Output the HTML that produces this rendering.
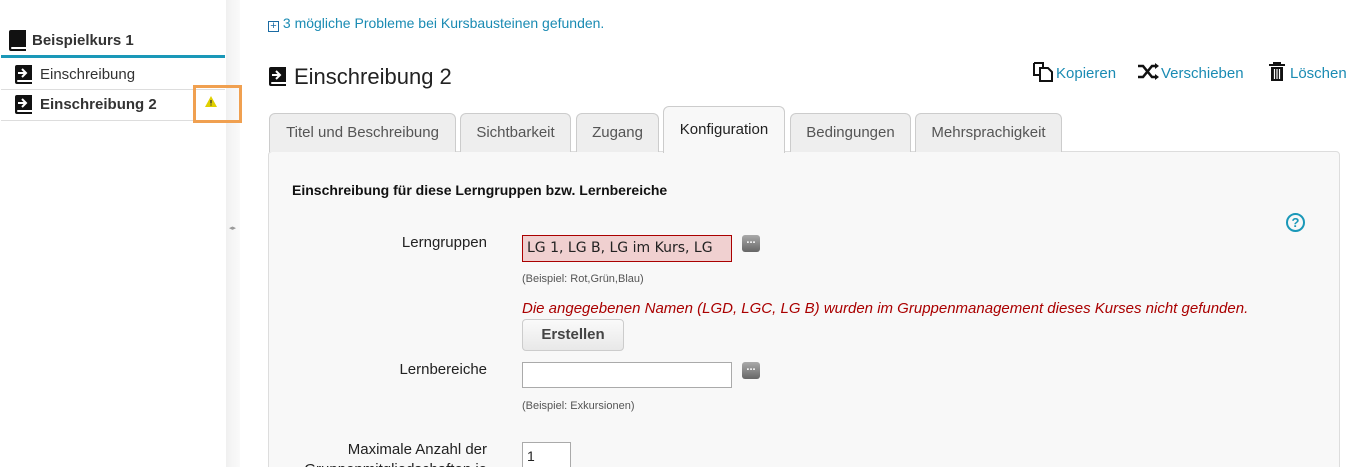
<!DOCTYPE html>
<html><head><meta charset="utf-8"><style>
*{box-sizing:border-box}
html,body{margin:0;width:1366px;height:467px;overflow:hidden}
body{background:#fff;font-family:"Liberation Sans",Arial,sans-serif;color:#222;position:relative}
.a{position:absolute}
.link{color:#1a8bb3}
.tab{position:absolute;top:113px;height:39px;border:1px solid #ccc;border-bottom:none;border-radius:6px 6px 0 0;background:#eee;color:#555;font-size:15px;text-align:center;line-height:38px}
.lbl{position:absolute;font-size:15px;text-align:right;width:220px}
.small{position:absolute;font-size:11px;color:#555}
.dots{position:absolute;width:18px;height:17px;background:linear-gradient(#aaa,#666);border-radius:3px;color:#fff;font-size:11px;line-height:10px;text-align:center;font-weight:bold}
.ni{position:absolute;width:17px;height:19px}
</style></head><body>
<div class="a" style="left:226px;top:0;width:14px;height:467px;background:linear-gradient(90deg,#f0f0f0,#f6f6f6,#fafafa)"></div>
<div class="a" style="left:229px;top:224px;font-size:7px;color:#999">◂▸</div>

<svg class="a" style="left:9px;top:30px" width="17" height="21" viewBox="0 0 17 21"><path d="M2 0h15v17H3a1 1 0 0 0 0 2h14v2H2a2 2 0 0 1-2-2V2a2 2 0 0 1 2-2z" fill="#111"/></svg>
<div class="a" style="left:32px;top:32px;font-size:15px;font-weight:bold;color:#333">Beispielkurs 1</div>
<div class="a" style="left:1px;top:55px;width:224px;height:3px;background:#1a98b8"></div>
<svg class="ni" style="left:15px;top:65px" viewBox="0 0 17 19"><path d="M2 0h15v15H3a1 1 0 0 0 0 2h14v2H2a2 2 0 0 1-2-2V2a2 2 0 0 1 2-2z" fill="#111"/><path d="M3 8h7M7 4l4 4-4 4" stroke="#fff" stroke-width="2" fill="none"/></svg>
<div class="a" style="left:40px;top:66px;font-size:15px;color:#333">Einschreibung</div>
<div class="a" style="left:1px;top:89px;width:224px;height:1px;background:#ddd"></div>
<svg class="ni" style="left:15px;top:95px" viewBox="0 0 17 19"><path d="M2 0h15v15H3a1 1 0 0 0 0 2h14v2H2a2 2 0 0 1-2-2V2a2 2 0 0 1 2-2z" fill="#111"/><path d="M3 8h7M7 4l4 4-4 4" stroke="#fff" stroke-width="2" fill="none"/></svg>
<div class="a" style="left:40px;top:96px;font-size:15px;font-weight:bold;color:#333">Einschreibung 2</div>
<div class="a" style="left:1px;top:120px;width:224px;height:1px;background:#ddd"></div>
<div class="a" style="left:193px;top:85px;width:49px;height:38px;border:3px solid #f0a050"></div>
<svg class="a" style="left:205px;top:96px" width="12" height="11" viewBox="0 0 12 11"><path d="M6 0L12 11H0z" fill="#e0d000"/><path d="M6 4v3.5M6 8.5v1" stroke="#333" stroke-width="1.3"/></svg>

<div class="a link" style="left:268px;top:15px;font-size:14px"><span style="display:inline-block;width:11px;height:11px;border:1px solid #1a6ba3;font-size:11px;line-height:9px;text-align:center;color:#1a6ba3;vertical-align:-1px">+</span> 3 mögliche Probleme bei Kursbausteinen gefunden.</div>

<svg class="ni" style="left:269px;top:67px" viewBox="0 0 17 19"><path d="M2 0h15v15H3a1 1 0 0 0 0 2h14v2H2a2 2 0 0 1-2-2V2a2 2 0 0 1 2-2z" fill="#111"/><path d="M3 8h7M7 4l4 4-4 4" stroke="#fff" stroke-width="2" fill="none"/></svg>
<div class="a" style="left:294px;top:64px;font-size:22px;color:#222">Einschreibung 2</div>

<svg class="a" style="left:1033px;top:62px" width="22" height="20" viewBox="0 0 22 20"><path d="M1 1h9v4M1 1v12h5" stroke="#111" stroke-width="2" fill="none"/><path d="M7 6h8l4 4v9H7z" stroke="#111" stroke-width="2" fill="#fff"/></svg>
<div class="a link" style="left:1056px;top:65px;font-size:15px">Kopieren</div>
<svg class="a" style="left:1138px;top:63px" width="22" height="17" viewBox="0 0 22 17"><path d="M0 3h5l9 11h5M0 14h5l9-11h5" stroke="#111" stroke-width="2.5" fill="none"/><path d="M17 0l4 3-4 3zM17 11l4 3-4 3z" fill="#111"/></svg>
<div class="a link" style="left:1161px;top:65px;font-size:15px">Verschieben</div>
<svg class="a" style="left:1269px;top:62px" width="16" height="20" viewBox="0 0 16 20"><path d="M0 3h16M5 3V1h6v2" stroke="#111" stroke-width="2" fill="none"/><path d="M2 5h12v14H2z" fill="#111"/><path d="M5.5 7v10M8 7v10M10.5 7v10" stroke="#fff" stroke-width="1.2"/></svg>
<div class="a link" style="left:1290px;top:65px;font-size:15px">Löschen</div>

<div class="a" style="left:268px;top:151px;width:1072px;height:330px;background:#f8f8f8;border:1px solid #ddd;border-radius:4px"></div>
<div class="tab" style="left:269px;width:187px">Titel und Beschreibung</div>
<div class="tab" style="left:460px;width:111px">Sichtbarkeit</div>
<div class="tab" style="left:576px;width:83px">Zugang</div>
<div class="tab" style="left:663px;top:106px;height:47px;width:122px;background:#f8f8f8;color:#222;line-height:46px">Konfiguration</div>
<div class="tab" style="left:790px;width:121px">Bedingungen</div>
<div class="tab" style="left:915px;width:147px">Mehrsprachigkeit</div>

<div class="a" style="left:292px;top:182px;font-size:14px;font-weight:bold;color:#111">Einschreibung für diese Lerngruppen bzw. Lernbereiche</div>
<div class="a" style="left:1286px;top:213px;width:19px;height:19px;border:2px solid #1a98b8;border-radius:50%;color:#1a98b8;font-size:13px;font-weight:bold;text-align:center;line-height:15px">?</div>

<div class="lbl" style="left:267px;top:234px">Lerngruppen</div>
<div class="a" style="left:522px;top:235px;width:210px;height:27px;background:#f0d0d0;border:1px solid #a00;font-family:'DejaVu Sans',sans-serif;font-size:14px;line-height:25px;padding-left:4px;overflow:hidden;white-space:nowrap">LG 1, LG B, LG im Kurs, LG</div>
<div class="dots" style="left:742px;top:235px">...</div>
<div class="small" style="left:522px;top:273px">(Beispiel: Rot,Grün,Blau)</div>
<div class="a" style="left:522px;top:300px;font-size:15px;font-style:italic;color:#a00">Die angegebenen Namen (LGD, LGC, LG B) wurden im Gruppenmanagement dieses Kurses nicht gefunden.</div>
<div class="a" style="left:522px;top:319px;width:102px;height:32px;border:1px solid #ccc;border-radius:4px;background:linear-gradient(#fafafa,#e8e8e8);font-size:15px;font-weight:bold;color:#444;text-align:center;line-height:30px">Erstellen</div>

<div class="lbl" style="left:267px;top:361px">Lernbereiche</div>
<div class="a" style="left:522px;top:362px;width:210px;height:26px;background:#fff;border:1px solid #aaa"></div>
<div class="dots" style="left:742px;top:362px">...</div>
<div class="small" style="left:522px;top:400px">(Beispiel: Exkursionen)</div>

<div class="lbl" style="left:267px;top:441px">Maximale Anzahl der</div>
<div class="lbl" style="left:267px;top:461px">Gruppenmitgliedschaften je</div>
<div class="a" style="left:522px;top:442px;width:49px;height:30px;background:#fff;border:1px solid #aaa;font-size:14px;padding:5px 4px">1</div>
</body></html>
